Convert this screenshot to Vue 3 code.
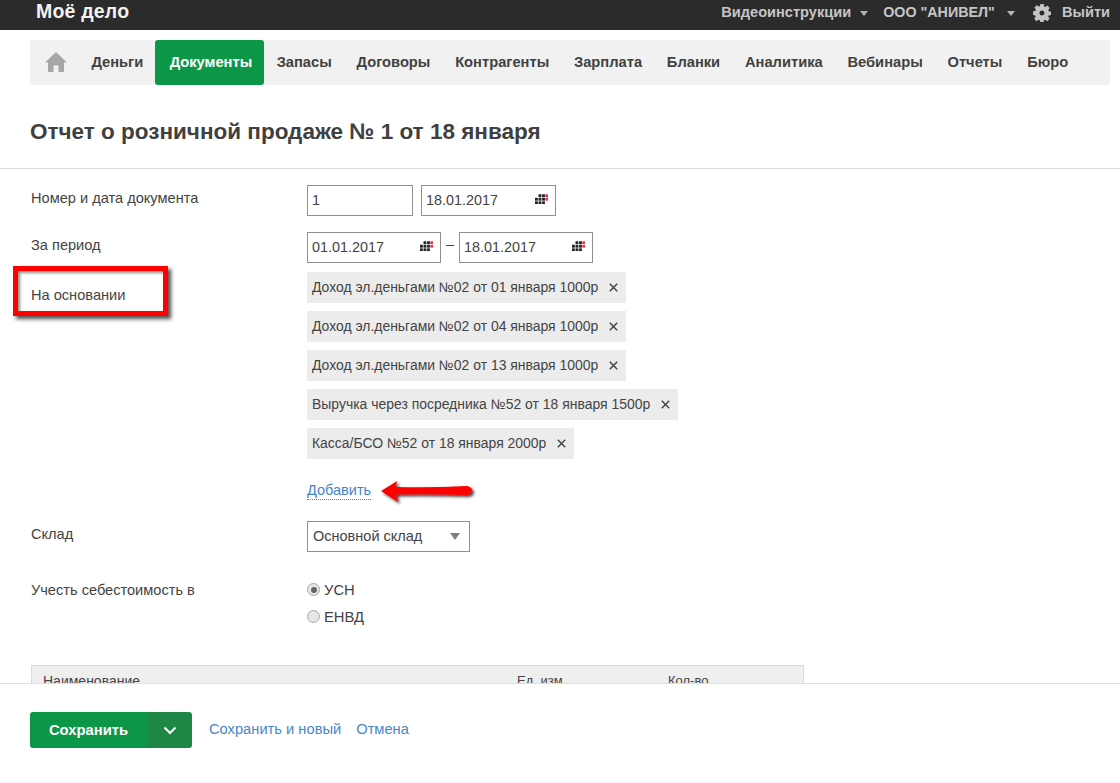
<script setup>
const menu = [
  { t: 'Деньги' }, { t: 'Документы', active: true }, { t: 'Запасы' }, { t: 'Договоры' }, { t: 'Контрагенты' },
  { t: 'Зарплата' }, { t: 'Бланки' }, { t: 'Аналитика' }, { t: 'Вебинары' }, { t: 'Отчеты' }, { t: 'Бюро' }
]
const tags = [
  'Доход эл.деньгами №02 от 01 января 1000р',
  'Доход эл.деньгами №02 от 04 января 1000р',
  'Доход эл.деньгами №02 от 13 января 1000р',
  'Выручка через посредника №52 от 18 января 1500р',
  'Касса/БСО №52 от 18 января 2000р'
]
const dots = [[3, 0], [6, 0], [0, 3], [3, 3], [6, 3], [0, 6], [3, 6], [6, 6]]
</script>

<template>
  <div class="page">
    <header class="top">
      <div class="logo">Моё дело</div>
      <div class="top-right">
        <span class="top-link">Видеоинструкции</span><i class="caret"></i>
        <span class="top-link org">ООО "АНИВЕЛ"</span><i class="caret c2nd"></i>
        <svg class="gear" width="18" height="18" viewBox="0 0 18 18">
          <path fill="#c4c4c4" fill-rule="evenodd" d="M7.300 0h3.400l.4 2.400 1.300.6 2-1.400 2.300 2.400-1.400 2 .5 1.300 2.200.4v3.400l-2.300.4-.5 1.300 1.400 2-2.400 2.400-2-1.400-1.300.5-.4 2.300H7.300l-.4-2.300-1.300-.5-2 1.400-2.400-2.400 1.400-2-.5-1.300L0 10.700V7.300l2.300-.4.5-1.300-1.400-2 2.400-2.400 2 1.400 1.300-.6zM9 6.500a2.500 2.500 0 1 0 0 5 2.500 2.500 0 0 0 0-5z"/>
        </svg>
        <span class="top-link exit">Выйти</span>
      </div>
    </header>

    <nav class="menu">
      <svg class="home" width="22" height="20" viewBox="0 0 22 20">
        <path fill="#a6a6a6" d="M11 0l11 10.500h-3V20h-5.500v-6.500h-5V20H3v-9.500H0z"/>
      </svg>
      <a v-for="m in menu" :key="m.t" class="item" :class="{ active: m.active }">{{ m.t }}</a>
    </nav>

    <h1 class="title">Отчет о розничной продаже № 1 от 18 января</h1>

    <main class="content">
      <div class="row first">
        <div class="label">Номер и дата документа</div>
        <div class="fields">
          <div class="input num">1</div>
          <div class="input date">18.01.2017
            <svg class="cal" width="13" height="10" viewBox="0 0 11 8">
              <rect v-for="d in dots" :key="d.join()" :x="d[0]" :y="d[1]" width="2.400" height="2.400" fill="#222" />
              <rect x="8.800" y="0" width="2.200" height="2.400" fill="#f0304a" /><rect x="8.800" y="3" width="2.200" height="2.400" fill="#f0304a" />
            </svg>
          </div>
        </div>
      </div>

      <div class="row period">
        <div class="label">За период</div>
        <div class="fields tight">
          <div class="input date d2">01.01.2017
            <svg class="cal" width="13" height="10" viewBox="0 0 11 8">
              <rect v-for="d in dots" :key="d.join()" :x="d[0]" :y="d[1]" width="2.400" height="2.400" fill="#222" />
              <rect x="8.800" y="0" width="2.200" height="2.400" fill="#f0304a" /><rect x="8.800" y="3" width="2.200" height="2.400" fill="#f0304a" />
            </svg>
          </div>
          <span class="dash">–</span>
          <div class="input date d2">18.01.2017
            <svg class="cal" width="13" height="10" viewBox="0 0 11 8">
              <rect v-for="d in dots" :key="d.join()" :x="d[0]" :y="d[1]" width="2.400" height="2.400" fill="#222" />
              <rect x="8.800" y="0" width="2.200" height="2.400" fill="#f0304a" /><rect x="8.800" y="3" width="2.200" height="2.400" fill="#f0304a" />
            </svg>
          </div>
        </div>
      </div>

      <div class="row basis">
        <div class="label basis-label">На основании</div>
        <div class="tags">
          <div v-for="t in tags" :key="t" class="tag">
            <span>{{ t }}</span>
            <svg width="9" height="9" viewBox="0 0 9 9"><path d="M.8.8l7.400 7.400M8.200.8L.8 8.200" stroke="#444" stroke-width="1.500" /></svg>
          </div>
          <a class="add">Добавить</a>
        </div>
      </div>

      <div class="row store">
        <div class="label">Склад</div>
        <div class="select">Основной склад<i class="sel-caret"></i></div>
      </div>

      <div class="row cost">
        <div class="label">Учесть себестоимость в</div>
        <div class="radios">
          <label class="radio"><i class="dot on"></i>УСН</label>
          <label class="radio"><i class="dot"></i>ЕНВД</label>
        </div>
      </div>

      <div class="table-head">
        <span class="c1">Наименование</span>
        <span class="c2">Ед. изм.</span>
        <span class="c3">Кол-во</span>
      </div>

      <div class="red-box"></div>
      <svg class="arrow" width="98" height="30" viewBox="0 0 98 30">
        <defs>
          <filter id="sh" x="-10%" y="-30%" width="125%" height="170%">
            <feDropShadow dx="2" dy="2" stdDeviation="1.500" flood-color="#000" flood-opacity=".75" />
          </filter>
        </defs>
        <path filter="url(#sh)" fill="#f00" d="M1 12 L17 2 L16 8 Q50 9 87 7 Q92 8 92 11.500 Q92 15 87 16 Q50 15 16 15.500 L18 23 Z" />
      </svg>
    </main>

    <footer class="foot">
      <div class="save">
        <span class="save-main">Сохранить</span>
        <span class="save-more">
          <svg width="14" height="9" viewBox="0 0 14 9"><path d="M1.500 1.500L7 7l5.500-5.500" fill="none" stroke="#fff" stroke-width="2" /></svg>
        </span>
      </div>
      <a class="link">Сохранить и новый</a>
      <a class="link">Отмена</a>
    </footer>
  </div>
</template>

<style>
html, body { margin: 0; padding: 0; background: #fff; }
</style>

<style scoped>
.page {
  width: 1120px;
  height: 783px;
  display: flex;
  flex-direction: column;
  overflow: hidden;
  font-family: "Liberation Sans", Arial, sans-serif;
  font-size: 14.5px;
  color: #3f3f3f;
}
.top {
  flex: none;
  height: 30px;
  background: #2b2b2b;
  display: flex;
  justify-content: space-between;
  align-items: center;
  padding: 0 10px 0 36px;
}
.logo {
  color: #f2f2f2;
  font-weight: 700;
  font-size: 19.500px;
  letter-spacing: .2px;
  line-height: 20px;
  margin-top: -9px;
}
.top-right { display: flex; align-items: center; margin-top: -6px; }
.top-link { color: #c6c6c6; font-weight: 700; font-size: 14.600px; }
.org { margin-left: 15px; font-size: 14.300px; }
.caret {
  width: 0; height: 0;
  border: 4px solid transparent;
  border-top: 5px solid #b5b5b5;
  border-bottom: 0;
  margin-left: 9px;
  margin-top: 3px;
}
.c2nd { margin-left: 12px; }
.gear { margin-left: 18px; margin-top: 1px; }
.exit { margin-left: 11px; font-size: 14.600px; }
.menu {
  flex: none;
  margin: 10px 10px 0 30px;
  height: 45px;
  background: #f1f1f1;
  border-radius: 3px;
  display: flex;
  align-items: stretch;
  padding-left: 15px;
}
.home { align-self: center; margin-right: 12px; margin-top: -2px; }
.item {
  display: flex;
  align-items: center;
  padding: 0 12.400px 2px;
  font-weight: 700;
  font-size: 14.700px;
  color: #414141;
  border-radius: 3px;
}
.item.active { background: #0c9648; color: #fff; padding: 0 12px 2px 15px; margin-left: -1px; }
.title {
  flex: none;
  margin: 0;
  height: 84px;
  box-sizing: border-box;
  padding: 34px 0 0 30px;
  font-size: 22.500px;
  line-height: 26px;
  font-weight: 700;
  color: #3f3f3f;
  border-bottom: 1px solid #dedede;
}
.content { flex: 1; min-height: 0; overflow: hidden; position: relative; padding-left: 31px; }
.row { display: flex; }
.label { width: 276px; flex: none; line-height: 16px; color: #444; font-size: 14.600px; }
.first { margin-top: 16px; }
.period { margin-top: 16px; }
.first .label { padding-top: 5px; }
.period .label { padding-top: 5px; }
.fields { display: flex; gap: 8px; }
.fields.tight { gap: 0; align-items: flex-start; }
.input {
  box-sizing: border-box;
  height: 31px;
  border: 1px solid #8f8f8f;
  padding: 0 4px;
  line-height: 28px;
  font-size: 14.400px;
  color: #444;
  position: relative;
  background: #fff;
}
.num { width: 106px; }
.date { width: 135px; }
.d2 { width: 134px; }
.cal { position: absolute; right: 7px; top: 8px; }
.dash { width: 18px; text-align: center; line-height: 24px; color: #444; }
.basis { margin-top: 9px; }
.basis-label { padding-top: 15px; }
.tags { display: flex; flex-direction: column; align-items: flex-start; gap: 8px; }
.tag {
  height: 31px;
  background: #ececec;
  display: flex;
  align-items: center;
  gap: 11px;
  padding: 0 8px 1px 5px;
  box-sizing: border-box;
  font-size: 13.950px;
  color: #444;
}
.add {
  margin-top: 15px;
  color: #3f86c9;
  line-height: 17px;
  border-bottom: 1px dotted #3f86c9;
}
.store { margin-top: 21px; }
.store .label { padding-top: 5px; }
.select {
  box-sizing: border-box;
  width: 163px;
  height: 31px;
  border: 1px solid #8f8f8f;
  padding: 0 5px;
  line-height: 28px;
  color: #444;
  position: relative;
}
.sel-caret {
  position: absolute;
  right: 9px;
  top: 11px;
  width: 0; height: 0;
  border: 5.500px solid transparent;
  border-top: 7px solid #808080;
  border-bottom: 0;
}
.cost { margin-top: 29px; }
.cost .label { padding-top: 1px; }
.radios { display: flex; flex-direction: column; gap: 10px; }
.radio { display: flex; align-items: center; gap: 4px; height: 17px; color: #444; font-size: 14.800px; }
.dot {
  width: 13px;
  height: 13px;
  box-sizing: border-box;
  border-radius: 50%;
  border: 1px solid #a9a9a9;
  background: #e6e6e6;
  position: relative;
}
.dot.on::after {
  content: "";
  position: absolute;
  left: 2.500px;
  top: 2.500px;
  width: 6px;
  height: 6px;
  border-radius: 50%;
  background: #666;
}
.table-head {
  margin-top: 40px;
  width: 773px;
  height: 60px;
  box-sizing: border-box;
  border: 1px solid #dcdcdc;
  background: linear-gradient(#f0f0f0, #e9e9e9);
  font-size: 13px;
  color: #444;
  display: flex;
  padding-top: 7px;
}
.c1 { margin-left: 11px; width: 474px; font-size: 14px; }
.c2 { width: 151px; }
.red-box {
  position: absolute;
  left: 13px;
  top: 97px;
  width: 155px;
  height: 50px;
  box-sizing: border-box;
  border: 5px solid #f00;
  box-shadow: 3px 3px 4px rgba(0, 0, 0, .7), inset 2px 2px 3px rgba(0, 0, 0, .45);
}
.arrow { position: absolute; left: 380px; top: 310px; }
.foot {
  flex: none;
  height: 100px;
  box-sizing: border-box;
  border-top: 1px solid #dedede;
  background: #fff;
  display: flex;
  align-items: flex-start;
  padding: 28px 0 0 30px;
}
.save {
  display: flex;
  width: 162px;
  height: 36px;
  border-radius: 3px;
  overflow: hidden;
  color: #fff;
  font-weight: 700;
  font-size: 14.800px;
}
.save-main {
  width: 117px;
  background: #0c9648;
  display: flex;
  align-items: center;
  justify-content: center;
  box-sizing: border-box;
}
.save-more {
  flex: 1;
  background: #1f8746;
  display: flex;
  align-items: center;
  justify-content: center;
}
.link { color: #4a86c8; line-height: 34px; margin-left: 17px; font-size: 14.700px; }
.link + .link { margin-left: 15px; }
</style>
